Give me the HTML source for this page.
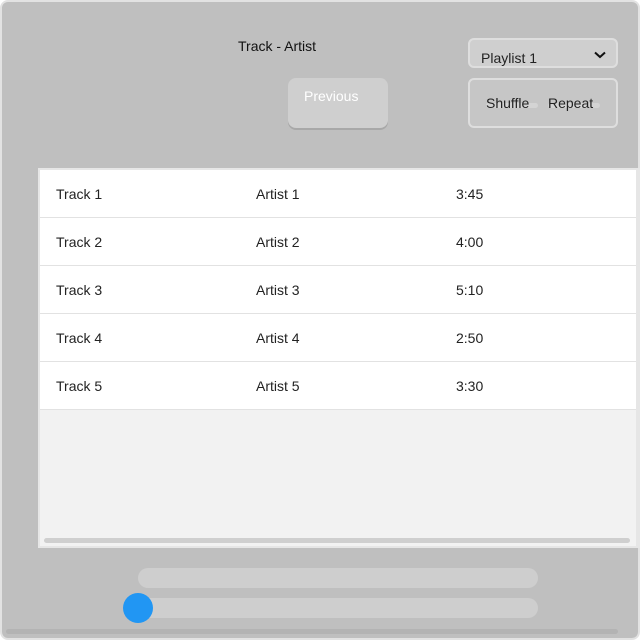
<!DOCTYPE html>
<html><head><style>
*{box-sizing:border-box;margin:0;padding:0}
body{width:640px;height:640px;background:#fff;font-family:"Liberation Sans",sans-serif;overflow:hidden;position:relative}
.frame{position:absolute;left:0;top:0;width:640px;height:640px;background:#bfbfbf;border:2px solid #e2e2e2;border-radius:8px}
.a{position:absolute}
.title{left:238px;top:38px;font-size:14px;color:#111}
.prev{left:288px;top:78px;width:100px;height:50px;background:#cfcfcf;border-radius:8px;box-shadow:0 2px 0 #a8a8a8;color:#fff;font-size:14px;padding:10px 0 0 16px}
.dd{left:468px;top:38px;width:150px;height:30px;background:#cfcfcf;border:2px solid #dedede;border-radius:6px;font-size:14px;color:#222;padding:10px 0 0 11px}
.box{left:468px;top:78px;width:150px;height:50px;background:#c6c6c6;border:2px solid #dedede;border-radius:6px;font-size:14px;color:#222}
.pill{position:absolute;top:23px;height:5px;background:#d4d4d4;border-radius:3px}
.tbl{left:38px;top:168px;width:602px;height:380px;background:#f2f2f2;border:2px solid #e6e6e6;border-right-width:4px}
.row{position:absolute;left:0;width:596px;height:48px;background:#fff;border-bottom:1px solid #e2e2e2;font-size:14px;color:#222}
.row span{position:absolute;top:16px}
.bar{background:#cecece;border-radius:10px}
</style></head><body>
<div class="frame"></div>
<div class="a title">Track - Artist</div>
<div class="a prev">Previous</div>
<div class="a dd">Playlist 1
<svg class="a" style="left:124px;top:11px" width="12" height="8" viewBox="0 0 12 8"><path d="M1 1.5L6 6L11 1.5" stroke="#111" stroke-width="2" fill="none"/></svg></div>
<div class="a box"><div class="pill" style="left:16px;width:52px"></div><div class="pill" style="left:78px;width:52px"></div><span class="a" style="left:16px;top:15px">Shuffle</span><span class="a" style="left:78px;top:15px">Repeat</span></div>
<div class="a tbl">
<div class="row" style="top:0"><span style="left:16px">Track 1</span><span style="left:216px">Artist 1</span><span style="left:416px">3:45</span></div>
<div class="row" style="top:48px"><span style="left:16px">Track 2</span><span style="left:216px">Artist 2</span><span style="left:416px">4:00</span></div>
<div class="row" style="top:96px"><span style="left:16px">Track 3</span><span style="left:216px">Artist 3</span><span style="left:416px">5:10</span></div>
<div class="row" style="top:144px"><span style="left:16px">Track 4</span><span style="left:216px">Artist 4</span><span style="left:416px">2:50</span></div>
<div class="row" style="top:192px"><span style="left:16px">Track 5</span><span style="left:216px">Artist 5</span><span style="left:416px">3:30</span></div>
<div class="a" style="left:4px;top:368px;width:586px;height:5px;background:#cfcfcf;border-radius:3px"></div>
</div>
<div class="a bar" style="left:138px;top:568px;width:400px;height:20px"></div>
<div class="a bar" style="left:138px;top:598px;width:400px;height:20px"></div>
<div class="a" style="left:123px;top:593px;width:30px;height:30px;border-radius:50%;background:#2196f3"></div>
<div class="a" style="left:6px;top:629px;width:612px;height:5px;background:#b3b3b3;border-radius:3px"></div>
</body></html>
